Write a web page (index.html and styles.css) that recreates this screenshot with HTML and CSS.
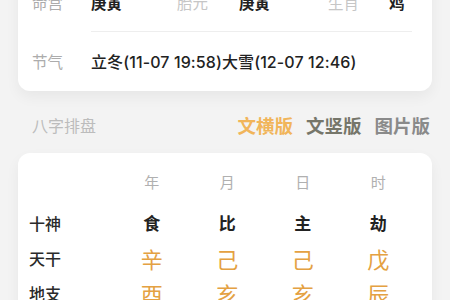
FILE: index.html
```html
<!DOCTYPE html>
<html lang="zh">
<head>
<meta charset="utf-8">
<link rel="stylesheet" href="styles.css">
</head>
<body>
<div class="page">
  <div class="card info">
    <div class="row grid6">
      <span class="lbl">命宫</span><span class="val">庚寅</span>
      <span class="lbl light">胎元</span><span class="val">庚寅</span>
      <span class="lbl light">生肖</span><span class="val">鸡</span>
    </div>
    <div class="divider"></div>
    <div class="row grid2">
      <span class="lbl">节气</span><span class="val term">立冬(11-07 19:58)大雪(12-07 12:46)</span>
    </div>
  </div>
  <div class="section-head">
    <span class="section-title">八字排盘</span>
    <div class="tabs">
      <span class="tab active">文横版</span>
      <span class="tab olive">文竖版</span>
      <span class="tab">图片版</span>
    </div>
  </div>
  <div class="card chart">
    <div class="crow head">
      <span></span><span>年</span><span>月</span><span>日</span><span>时</span>
    </div>
    <div class="crow god">
      <span class="rlbl">十神</span><span>食</span><span>比</span><span>主</span><span>劫</span>
    </div>
    <div class="crow gan">
      <span class="rlbl">天干</span><span>辛</span><span>己</span><span>己</span><span>戊</span>
    </div>
    <div class="crow gan">
      <span class="rlbl">地支</span><span>酉</span><span>亥</span><span>亥</span><span>辰</span>
    </div>
  </div>
</div>
</body>
</html>
```
FILE: styles.css
```css
html, body {
  margin: 0;
  padding: 0;
  background: #f3f3f3;
  font-family: "Noto Sans CJK SC", "Noto Sans", sans-serif;
  overflow: hidden;
}
.page {
  width: 450px;
  height: 300px;
  overflow: hidden;
}
.card {
  background: #fff;
  border-radius: 12px;
  margin: 0 18px;
  box-shadow: 0 6px 14px rgba(0,0,0,0.05);
}
.info {
  margin-top: -27px;
  padding: 0 20px 1px 14px;
}
.row {
  height: 58px;
  align-items: center;
}
.grid6 {
  display: grid;
  grid-template-columns: 59px 86px 62px 89px 61px auto;
}
.grid2 {
  display: grid;
  grid-template-columns: 59px auto;
}
.lbl {
  font-size: 15.5px;
  color: #acacac;
}
.lbl.light {
  color: #c6c6c6;
}
.val {
  font-size: 15.5px;
  font-weight: 600;
  color: #222;
}
.term {
  font-family: "Inter", "Noto Sans CJK SC", sans-serif;
  font-size: 16px;
  font-weight: 500;
  letter-spacing: 0.1px;
}
.divider {
  height: 1px;
  background: #eeeeee;
  margin-left: 59px;
}
.section-head {
  height: 62px;
  box-sizing: border-box;
  padding: 6px 20px 0 32px;
  display: flex;
  align-items: center;
  justify-content: space-between;
}
.section-title {
  font-size: 16px;
  color: #bcbcbc;
}
.tabs {
  display: flex;
  gap: 13px;
}
.tab {
  font-size: 18.5px;
  font-weight: 700;
  color: #8a8a8a;
}
.tab.active {
  color: #f1b55a;
}
.tab.olive {
  color: #76766a;
}
.chart {
  padding: 10px 16px 0 11px;
  height: 200px;
}
.crow {
  display: grid;
  grid-template-columns: 85px repeat(4, 1fr);
  align-items: center;
  height: 35px;
  text-align: center;
}
.crow .rlbl {
  text-align: left;
  font-size: 16px;
  color: #2a2a2a;
  font-weight: 500;
}
.head {
  height: 36px;
  margin-bottom: 6px;
  font-size: 15px;
  color: #b0b0b0;
}
.god span {
  font-size: 17px;
  font-weight: 700;
  color: #222;
}
.god .rlbl {
  font-size: 16px;
  font-weight: 500;
}
.gan span {
  font-size: 22px;
  color: #e4a142;
  font-weight: 400;
}
.gan .rlbl {
  font-size: 16px;
  font-weight: 500;
  color: #2a2a2a;
}
```
